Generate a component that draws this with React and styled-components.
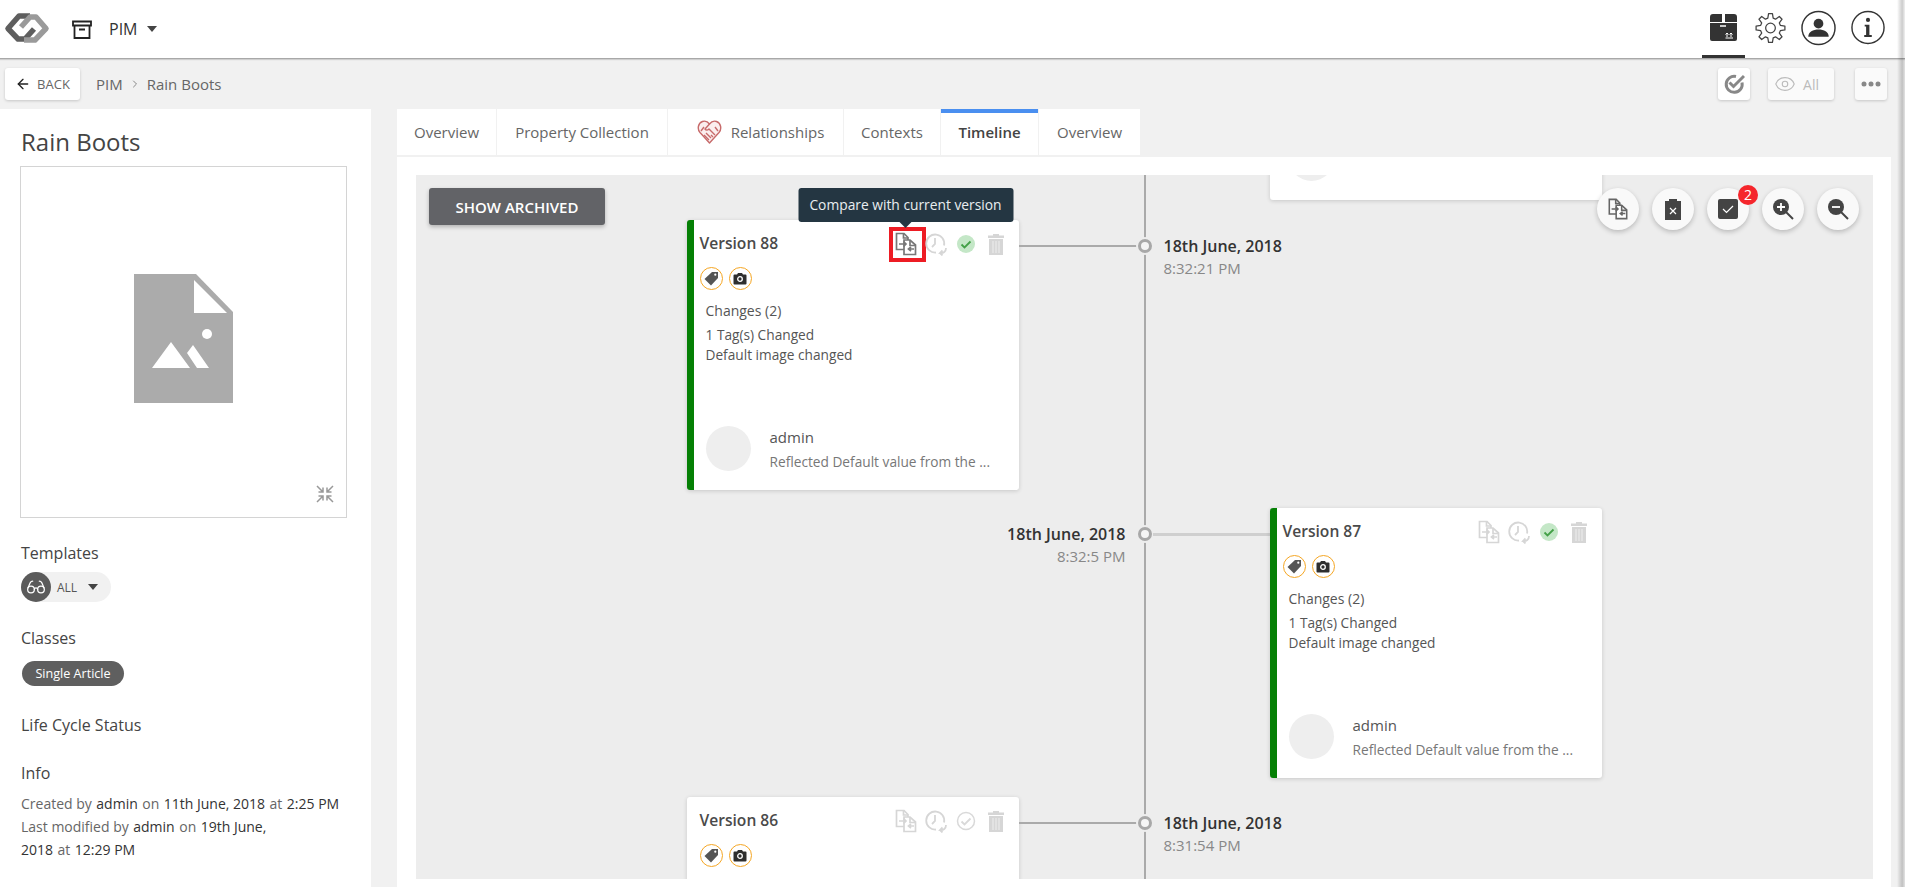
import React from 'react';
import styled, {createGlobalStyle} from 'styled-components';
import {ArrowLeft, ChevronRight, Eye, Glasses} from 'lucide-react';

const GlobalStyle = createGlobalStyle`
  html, body {
    margin: 0;
    height: 100%;
    overflow: hidden;
    background: #f1f1f1;
    font-family: "Open Sans", "Liberation Sans", sans-serif;
    color: #444;
  }
  * { box-sizing: border-box; }
`;

const Page = styled.div`
  position: relative;
  display: flex;
  flex-direction: column;
  height: 887px;
`;

const EdgeShade = styled.div`
  position: absolute;
  z-index: 5;
  top: 0;
  right: 0;
  bottom: 0;
  width: 8px;
  background: linear-gradient(to right, rgba(0, 0, 0, 0), rgba(0, 0, 0, 0.2) 65%, rgba(0, 0, 0, 0.06));
`;

const TopBar = styled.header`
  position: relative;
  display: flex;
  align-items: center;
  height: 59px;
  flex: none;
  padding: 0 20px 0 0;
  background: #fff;
  border-bottom: 1px solid #a8a8a8;
  box-shadow: 0 1px 1px rgba(0, 0, 0, 0.14);
`;

const LogoMark = styled.svg`
  width: 56px;
  height: 40px;
  margin-top: -2px;
`;

const ModuleIcon = styled.svg`
  width: 20px;
  height: 19px;
  margin-left: 16px;
`;

const ModuleName = styled.span`
  margin-left: 17px;
  font-size: 16px;
  color: #333;
`;

const Caret = styled.span`
  display: inline-block;
  margin-left: ${p => p.$gap || 10}px;
  border-left: 5px solid transparent;
  border-right: 5px solid transparent;
  border-top: 6px solid #444;
`;

const TopActions = styled.div`
  display: flex;
  align-items: center;
  margin-left: auto;
  height: 100%;
`;

const TopAction = styled.div`
  display: flex;
  align-items: center;
  justify-content: center;
  width: ${p => p.$width}px;
  height: 100%;
  margin-left: ${p => p.$left || 0}px;
  border-bottom: 3px solid ${p => p.$active ? '#333' : 'transparent'};
`;

const CrumbBar = styled.div`
  display: flex;
  align-items: center;
  height: 50px;
  flex: none;
  padding: 0 18px 0 5px;
`;

const WhiteButton = styled.button`
  display: flex;
  align-items: center;
  justify-content: center;
  gap: ${p => p.$gap || 0}px;
  width: ${p => p.$width || 32}px;
  height: 32px;
  padding: 0 ${p => p.$right || 0}px 0 0;
  margin-left: ${p => p.$left || 0}px;
  border: 0;
  border-radius: 3px;
  background: ${p => p.$faint ? '#fafafa' : '#fff'};
  box-shadow: 0 1px 3px rgba(0, 0, 0, 0.18);
  font-family: inherit;
  font-size: 13px;
  color: #666;
`;

const AllLabel = styled.span`
  font-size: 14px;
  color: #bbb;
`;

const Crumbs = styled.div`
  display: flex;
  align-items: center;
  margin-left: 16px;
  font-size: 15px;
  color: #666;
`;

const CrumbArrow = styled(ChevronRight)`
  margin: 0 6px;
`;

const CrumbSpacer = styled.div`
  flex: 1;
`;

const Body = styled.div`
  display: flex;
  flex: 1;
  min-height: 0;
`;

const SidePanel = styled.aside`
  width: 371px;
  flex: none;
  padding: 16px 20px 0 20px;
  background: #fff;
`;

const ProductTitle = styled.h1`
  margin: 0 0 8px 1px;
  font-size: 24px;
  line-height: 33px;
  font-weight: 400;
  color: #444;
`;

const ImageBox = styled.div`
  position: relative;
  display: flex;
  align-items: center;
  justify-content: center;
  width: 327px;
  height: 352px;
  padding-bottom: 7px;
  border: 1px solid #d4d4d4;
`;

const ShrinkIcon = styled.svg`
  position: absolute;
  right: 12px;
  bottom: 14px;
  width: 18px;
  height: 18px;
`;

const SideLabel = styled.div`
  margin: ${p => p.$top}px 0 ${p => p.$bottom || 0}px 1px;
  font-size: 16px;
  line-height: 22px;
  color: #444;
`;

const TemplatePill = styled.div`
  display: flex;
  align-items: center;
  width: 90px;
  height: 30px;
  margin-left: 1px;
  border-radius: 15px;
  background: #f1f1f1;
  font-size: 12px;
  color: #555;
`;

const PillIcon = styled.div`
  display: flex;
  align-items: center;
  justify-content: center;
  width: 30px;
  height: 30px;
  margin-right: 6px;
  border-radius: 50%;
  background: #5b5b5b;
  color: #fff;
`;

const ClassChip = styled.div`
  width: 102px;
  height: 25px;
  margin-left: 2px;
  border-radius: 13px;
  background: #5f5f5f;
  color: #fff;
  font-size: 12.6px;
  line-height: 25px;
  text-align: center;
`;

const InfoText = styled.div`
  margin-left: 1px;
  font-size: 14px;
  line-height: 23px;
  color: #666;
  white-space: nowrap;

  b {
    font-weight: 400;
    color: #333;
    margin: 0 4.5px;
  }

  b.first {
    margin-left: 0;
  }
`;

const Workspace = styled.main`
  display: flex;
  flex-direction: column;
  flex: 1;
  min-width: 0;
  margin-left: 26px;
  padding-right: 14px;
`;

const TabBar = styled.nav`
  display: flex;
  height: 46px;
  flex: none;
`;

const Tab = styled.div`
  display: flex;
  align-items: center;
  justify-content: center;
  gap: 9px;
  width: ${p => p.$width}px;
  margin-right: 1px;
  padding: 0 0 ${p => p.$active ? 4 : 0}px ${p => p.$nudge || 0}px;
  background: #fff;
  border-top: ${p => p.$active ? '4px solid #4a8ff0' : '0'};
  font-size: 15px;
  font-weight: ${p => p.$active ? 600 : 400};
  color: ${p => p.$active ? '#444' : '#666'};
`;

const TimelinePanel = styled.div`
  flex: 1;
  min-height: 0;
  margin-top: 2px;
  padding: 18px 18px 8px 19px;
  background: #fff;
`;

const Canvas = styled.div`
  position: relative;
  height: 100%;
  overflow: hidden;
  background: #ededed linear-gradient(#aaa, #aaa) center / 2px 100% no-repeat;
`;

const ArchiveButton = styled.button`
  position: absolute;
  z-index: 3;
  left: 13px;
  top: 13px;
  width: 176px;
  height: 37px;
  border: 0;
  border-radius: 3px;
  background: #626367;
  box-shadow: 0 2px 4px rgba(0, 0, 0, 0.25);
  color: #fff;
  font-family: inherit;
  font-size: 15px;
  font-weight: 600;
`;

const FloatTools = styled.div`
  position: absolute;
  z-index: 3;
  right: 14px;
  top: 13px;
  display: flex;
  gap: 13px;
`;

const FloatTool = styled.div`
  position: relative;
  display: flex;
  align-items: center;
  justify-content: center;
  width: 42px;
  height: 42px;
  border-radius: 50%;
  background: #f9f9f9;
  box-shadow: 0 2px 5px rgba(0, 0, 0, 0.22);
`;

const Badge = styled.span`
  position: absolute;
  top: -3px;
  right: -9px;
  width: 20px;
  height: 20px;
  border-radius: 50%;
  background: #f5262c;
  color: #fff;
  font-size: 14px;
  line-height: 20px;
  text-align: center;
`;

const Row = styled.div`
  display: grid;
  grid-template-columns: 1fr 16px 1fr;
  height: 270px;
  margin-top: ${p => p.$top}px;
`;

const RowSide = styled.div`
  display: flex;
  align-items: flex-start;
  justify-content: ${p => p.$end ? 'flex-end' : 'flex-start'};
  min-width: 0;
`;

const Card = styled.article`
  display: flex;
  flex-direction: column;
  width: 332px;
  height: 270px;
  flex: none;
  margin-left: ${p => p.$left || 0}px;
  padding: 10px 11px 0 ${p => p.$current ? 6 : 13}px;
  border-left: ${p => p.$current ? '7px solid #058005' : '0'};
  border-radius: 3px;
  background: #fff;
  box-shadow: 0 1px 4px rgba(0, 0, 0, 0.16);
`;

const CardHead = styled.div`
  display: flex;
  align-items: center;
  height: 26px;
  margin-top: 1px;
`;

const CardTitle = styled.div`
  flex: 1;
  padding-bottom: 2px;
  font-size: 15.6px;
  font-weight: 600;
  color: #4a4a4a;
`;

const CardTools = styled.div`
  display: flex;
  align-items: center;
  gap: 6px;
`;

const ToolSlot = styled.div`
  position: relative;
  display: flex;
  align-items: center;
  justify-content: center;
  width: 24px;
  height: 24px;
`;

const RedFrame = styled.span`
  position: absolute;
  left: -5px;
  top: -5px;
  width: 37px;
  height: 35px;
  border: 4px solid #ed1c24;
`;

const Tooltip = styled.div`
  position: absolute;
  z-index: 4;
  left: 50%;
  bottom: 34px;
  transform: translateX(-50%);
  width: 215px;
  height: 34px;
  border-radius: 3px;
  background: #243642;
  color: #e9eef0;
  font-size: 13.8px;
  line-height: 34px;
  text-align: center;
  white-space: nowrap;

  &::after {
    content: "";
    position: absolute;
    left: 50%;
    top: 100%;
    margin-left: -6px;
    border-left: 6px solid transparent;
    border-right: 6px solid transparent;
    border-top: 6px solid #243642;
  }
`;

const AttrRow = styled.div`
  display: flex;
  gap: 6px;
  margin-top: 10px;
`;

const AttrDot = styled.div`
  display: flex;
  align-items: center;
  justify-content: center;
  width: 23px;
  height: 23px;
  border: 1px solid #f5a623;
  border-radius: 50%;
`;

const Changes = styled.div`
  margin: 11px 0 0 6px;
  font-size: 13.7px;
  line-height: 20px;
  color: #555;
`;

const ChangesHead = styled.div`
  margin-bottom: 4px;
  font-size: 14px;
  line-height: 20px;
`;

const Author = styled.div`
  display: flex;
  align-items: center;
  gap: 19px;
  margin: auto 0 19px 6px;
`;

const Avatar = styled.div`
  width: 45px;
  height: 45px;
  flex: none;
  border-radius: 50%;
  background: #eee;
`;

const AuthorText = styled.div`
  padding-top: 2px;
`;

const AuthorName = styled.div`
  margin-bottom: 7px;
  font-size: 15px;
  line-height: 18px;
  color: #555;
`;

const AuthorNote = styled.div`
  font-size: 13.7px;
  line-height: 18px;
  color: #777;
  white-space: nowrap;
`;

const Connector = styled.div`
  width: ${p => p.$thick ? 117 : 118}px;
  flex: none;
  height: ${p => p.$thick ? 3 : 2}px;
  margin-top: 25px;
  background: ${p => p.$thick ? '#cfcfcf' : '#aaa'};
`;

const NodeCell = styled.div`
  display: flex;
  justify-content: center;
`;

const Node = styled.div`
  width: 14px;
  height: 14px;
  margin-top: 19px;
  border: 3px solid #a8a8a8;
  border-radius: 50%;
  background: #f5f5f5;
  box-shadow: 0 0 0 2px #ededed;
`;

const DateBlock = styled.div`
  margin: 15px ${p => p.$end ? 11 : 0}px 0 ${p => p.$end ? 0 : 11}px;
  text-align: ${p => p.$end ? 'right' : 'left'};
`;

const DateText = styled.div`
  font-size: 16px;
  line-height: 22px;
  font-weight: 600;
  color: #333;
`;

const TimeText = styled.div`
  font-size: 15px;
  line-height: 22px;
  color: #888;
`;

function Logo() {
    return (
        <LogoMark viewBox="0 0 56 40" fill="none" strokeWidth="5.500" strokeLinejoin="round">
            <path d="M30 8H19L8 20.500l10 10.500h7l9-10" stroke="#5e5e5e"/>
            <path d="M24 32h11l11-11.500L36 9h-6l-9 10" stroke="#9a9a9a"/>
        </LogoMark>
    );
}

// outline gear, teeth computed round the centre
function gearPath(cx, cy, outer, inner, teeth) {
    const step = (Math.PI * 2) / teeth;
    let d = '';
    for (let i = 0; i < teeth; i++) {
        const a = i * step - Math.PI / 2;
        const pts = [
            [inner, a - step * 0.34],
            [outer, a - step * 0.17],
            [outer, a + step * 0.17],
            [inner, a + step * 0.34],
        ];
        pts.forEach(([r, t], j) => {
            const x = (cx + r * Math.cos(t)).toFixed(2);
            const y = (cy + r * Math.sin(t)).toFixed(2);
            d += (i === 0 && j === 0 ? 'M' : 'L') + x + ' ' + y;
        });
    }
    return d + 'Z';
}

function HeartIcon() {
    return (
        <svg width="25" height="24" viewBox="0 0 25 24" fill="none" stroke="#c76b6b" strokeWidth="1.400" strokeLinejoin="round">
            <path d="M12.500 23L3 12.500C0 9 1 3 5.500 1.500 8.500.5 11 2 12.500 4 14 2 16.500.5 19.500 1.500 24 3 25 9 22 12.500Z" fill="#fbeeee"/>
            <path d="M12.500 4L8 9c1 1.500 2.500 1.500 4 0l6 6M4 11l3-4M21 11l-3-4"/>
            <path d="M9 13l5 5M7 15l5 5M14 15l2 2"/>
        </svg>
    );
}

function CompareIcon({color, size = 24}) {
    return (
        <svg width={size} height={size} viewBox="0 0 24 24" fill="none" stroke={color} strokeWidth="1.700">
            <path d="M10 17.500H2.500V1.500H10L14 5.500V8"/>
            <path d="M9.500 1.500V6H14"/>
            <path d="M10 8H16L21.500 13V22.500H10Z" fill="#fff"/>
            <path d="M16 8V13.500H21.500"/>
            <path d="M5 12H12M9.500 9.500l2.500 2.500-2.500 2.500"/>
            <path d="M20 17H14.500M17 15l-2.500 2 2.500 2"/>
        </svg>
    );
}

function HistoryIcon({color}) {
    return (
        <svg width="24" height="24" viewBox="0 0 24 24" fill="none" stroke={color} strokeWidth="1.800">
            <path d="M20 13.500A9 9 0 1 0 12 20.500"/>
            <path d="M11 6v6l-3 3"/>
            <path d="M22 16c0 3.500-2.500 5.500-6 5l2.500-2.500M16 21l2.500 2.500"/>
        </svg>
    );
}

function CheckIcon({done}) {
    return (
        <svg width="20" height="20" viewBox="0 0 20 20" fill="none">
            <circle cx="10" cy="10" r={done ? 9 : 8.500} fill={done ? '#c4e7c7' : 'none'} stroke={done ? 'none' : '#d9d9d9'} strokeWidth="1.500"/>
            <path d="M5.500 10.500l3 3 6-6" stroke={done ? '#43a047' : '#d9d9d9'} strokeWidth="1.800"/>
        </svg>
    );
}

function TrashIcon() {
    return (
        <svg width="18" height="21" viewBox="0 0 18 21">
            <path d="M6 0h6v1.500h5V4H1V1.500h5Z" fill="#d6d6d6"/>
            <path d="M2 5h14v16H2Z" fill="#d6d6d6"/>
            <path d="M6 7v12M9 7v12M12 7v12" stroke="#eee" strokeWidth="1"/>
        </svg>
    );
}

function TagIcon() {
    return (
        <svg width="15" height="15" viewBox="0 0 15 15">
            <path d="M8 1h6v6l-7 7.500L.5 8Z" fill="#555"/>
            <circle cx="11.300" cy="3.700" r="1.100" fill="#fff"/>
        </svg>
    );
}

function CameraIcon() {
    return (
        <svg width="14" height="13" viewBox="0 0 14 13">
            <path d="M1.500 2.500h2.500l1-1.500h4l1 1.500h2.500a1 1 0 0 1 1 1v8a1 1 0 0 1-1 1h-11a1 1 0 0 1-1-1v-8a1 1 0 0 1 1-1Z" fill="#2e2e2e"/>
            <circle cx="7" cy="7" r="2.300" fill="none" stroke="#fff" strokeWidth="1.300"/>
        </svg>
    );
}

function VersionCard({name, current, done, hovered, clipped}) {
    return (
        <Card $current={current}>
            <CardHead>
                <CardTitle>{name}</CardTitle>
                <CardTools>
                    <ToolSlot>
                        <CompareIcon color={hovered ? '#777' : '#d6d6d6'}/>
                        {hovered && <RedFrame/>}
                        {hovered && <Tooltip>Compare with current version</Tooltip>}
                    </ToolSlot>
                    <ToolSlot><HistoryIcon color="#d6d6d6"/></ToolSlot>
                    <ToolSlot><CheckIcon done={done}/></ToolSlot>
                    <ToolSlot><TrashIcon/></ToolSlot>
                </CardTools>
            </CardHead>
            <AttrRow>
                <AttrDot><TagIcon/></AttrDot>
                <AttrDot><CameraIcon/></AttrDot>
            </AttrRow>
            {!clipped && (
                <>
                    <Changes>
                        <ChangesHead>Changes (2)</ChangesHead>
                        <div>1 Tag(s) Changed</div>
                        <div>Default image changed</div>
                    </Changes>
                    <Author>
                        <Avatar/>
                        <AuthorText>
                            <AuthorName>admin</AuthorName>
                            <AuthorNote>Reflected Default value from the ...</AuthorNote>
                        </AuthorText>
                    </Author>
                </>
            )}
        </Card>
    );
}

function Stamp({date, time, end}) {
    return (
        <DateBlock $end={end}>
            <DateText>{date}</DateText>
            <TimeText>{time}</TimeText>
        </DateBlock>
    );
}

const tabs = [
    {label: 'Overview', width: 99},
    {label: 'Property Collection', width: 170},
    {label: 'Relationships', width: 175, icon: true},
    {label: 'Contexts', width: 96},
    {label: 'Timeline', width: 97, active: true},
    {label: 'Overview', width: 101},
];

export default function App() {
    return (
        <Page>
            <GlobalStyle/>
            <TopBar>
                <Logo/>
                <ModuleIcon viewBox="0 0 20 19" fill="none" stroke="#222" strokeWidth="1.800">
                    <path d="M1 1.500h18v4H1Z"/>
                    <path d="M2.500 5.500V18h15V5.500M7 9.500h6"/>
                </ModuleIcon>
                <ModuleName>PIM</ModuleName>
                <Caret/>
                <TopActions>
                    <TopAction $active $width={43}>
                        <svg width="27" height="28" viewBox="0 0 27 28">
                            <path d="M3 0h9v8H0V3a3 3 0 0 1 3-3ZM15 0h9a3 3 0 0 1 3 3v5H15Z" fill="#333"/>
                            <path d="M0 9h27v16a2 2 0 0 1-2 2H2a2 2 0 0 1-2-2Z" fill="#333"/>
                            <path d="M10 12h6" stroke="#fff" strokeWidth="1.500"/>
                            <path d="M17 23v-4M21 23v-4M15.500 24h7.500M15.500 20.500L17 19l1.500 1.500M19.500 20.500L21 19l1.500 1.500" stroke="#fff" strokeWidth="1" fill="none"/>
                        </svg>
                    </TopAction>
                    <TopAction $width={31} $left={10}>
                        <svg width="32" height="32" viewBox="0 0 32 32" fill="none" stroke="#444" strokeWidth="1.300" strokeLinejoin="round">
                            <path d={gearPath(16, 16, 15, 10.500, 8)}/>
                            <circle cx="16" cy="16" r="5"/>
                        </svg>
                    </TopAction>
                    <TopAction $width={35} $left={15}>
                        <svg width="36" height="36" viewBox="0 0 36 36">
                            <circle cx="18" cy="18" r="17" fill="none" stroke="#333" strokeWidth="1.500"/>
                            <circle cx="18" cy="13.500" r="5" fill="#333"/>
                            <path d="M7.500 27c0-5 5-7.500 10.500-7.500S28.500 22 28.500 27Z" fill="#333"/>
                        </svg>
                    </TopAction>
                    <TopAction $width={34} $left={15}>
                        <svg width="35" height="35" viewBox="0 0 36 36">
                            <circle cx="18" cy="18" r="17" fill="none" stroke="#333" strokeWidth="1.500"/>
                            <circle cx="18" cy="10" r="2.200" fill="#333"/>
                            <path d="M14.500 15h5v11h2.500v2h-8v-2H16v-9h-1.500Z" fill="#333"/>
                        </svg>
                    </TopAction>
                </TopActions>
            </TopBar>
            <CrumbBar>
                <WhiteButton $width={75} $gap={6}>
                    <ArrowLeft size={16} color="#222"/>
                    BACK
                </WhiteButton>
                <Crumbs>
                    PIM
                    <CrumbArrow size={12} color="#888"/>
                    Rain Boots
                </Crumbs>
                <CrumbSpacer/>
                <WhiteButton>
                    <svg width="22" height="22" viewBox="0 0 22 22" fill="none" stroke="#888" strokeWidth="3">
                        <path d="M19 9.500A8 8 0 1 1 13 3.500"/>
                        <path d="M6.500 9.500l4 4L21 3"/>
                    </svg>
                </WhiteButton>
                <WhiteButton $width={66} $left={18} $gap={7} $right={9} $faint>
                    <Eye size={22} strokeWidth={1.200} color="#bbb"/>
                    <AllLabel>All</AllLabel>
                </WhiteButton>
                <WhiteButton $left={21} $faint>
                    <svg width="20" height="6" viewBox="0 0 20 6" fill="#888">
                        <circle cx="3" cy="3" r="2.500"/>
                        <circle cx="10" cy="3" r="2.500"/>
                        <circle cx="17" cy="3" r="2.500"/>
                    </svg>
                </WhiteButton>
            </CrumbBar>
            <Body>
                <SidePanel>
                    <ProductTitle>Rain Boots</ProductTitle>
                    <ImageBox>
                        <svg width="99" height="129" viewBox="0 0 99 129">
                            <path d="M0 0H62L99 38V129H0Z" fill="#ababab"/>
                            <path d="M60 6V39H93Z" fill="#fff"/>
                            <circle cx="73" cy="60" r="5" fill="#fff"/>
                            <path d="M18 94L37 68L56 94ZM53 79L59 71L75 94H63Z" fill="#fff"/>
                        </svg>
                        <ShrinkIcon viewBox="0 0 18 18" fill="none" stroke="#999" strokeWidth="1.500">
                            <path d="M1 1l6 6M7 2.500V7H2.500M17 1l-6 6M11 2.500V7h4.500M1 17l6-6M7 15.500V11H2.500M17 17l-6-6M11 15.500V11h4.500"/>
                        </ShrinkIcon>
                    </ImageBox>
                    <SideLabel $top={24} $bottom={8}>Templates</SideLabel>
                    <TemplatePill>
                        <PillIcon><Glasses size={20} strokeWidth={1.500}/></PillIcon>
                        ALL
                        <Caret $gap={11}/>
                    </TemplatePill>
                    <SideLabel $top={25} $bottom={12}>Classes</SideLabel>
                    <ClassChip>Single Article</ClassChip>
                    <SideLabel $top={28}>Life Cycle Status</SideLabel>
                    <SideLabel $top={26} $bottom={8}>Info</SideLabel>
                    <InfoText>
                        Created by<b>admin</b>on<b>11th June, 2018</b>at<b>2:25 PM</b>
                        <br/>
                        Last modified by<b>admin</b>on<b>19th June,</b>
                        <br/>
                        <b className="first">2018</b>at<b>12:29 PM</b>
                    </InfoText>
                </SidePanel>
                <Workspace>
                    <TabBar>
                        {tabs.map((tab, i) => (
                            <Tab key={i} $width={tab.width} $active={tab.active} $nudge={tab.icon ? 10 : 0}>
                                {tab.icon && <HeartIcon/>}
                                {tab.label}
                            </Tab>
                        ))}
                    </TabBar>
                    <TimelinePanel>
                        <Canvas>
                            <ArchiveButton>SHOW ARCHIVED</ArchiveButton>
                            <FloatTools>
                                <FloatTool><CompareIcon color="#666" size={22}/></FloatTool>
                                <FloatTool>
                                    <svg width="18" height="22" viewBox="0 0 18 22">
                                        <path d="M1 3h4V1h8v2h4v19H1Z" fill="#444"/>
                                        <path d="M6 10l6 6M12 10l-6 6" stroke="#fff" strokeWidth="1.200"/>
                                    </svg>
                                </FloatTool>
                                <FloatTool>
                                    <svg width="20" height="20" viewBox="0 0 20 20">
                                        <rect width="20" height="20" rx="2" fill="#444"/>
                                        <path d="M5 10l3.500 3.500L15 7" stroke="#fff" strokeWidth="1.200" fill="none"/>
                                    </svg>
                                    <Badge>2</Badge>
                                </FloatTool>
                                <FloatTool>
                                    <svg width="22" height="22" viewBox="0 0 22 22">
                                        <circle cx="9" cy="9" r="8" fill="#444"/>
                                        <path d="M5 9h8M9 5v8" stroke="#fff" strokeWidth="1.800"/>
                                        <path d="M14 14l7 7" stroke="#444" strokeWidth="2"/>
                                    </svg>
                                </FloatTool>
                                <FloatTool>
                                    <svg width="22" height="22" viewBox="0 0 22 22">
                                        <circle cx="9" cy="9" r="8" fill="#444"/>
                                        <path d="M5 9h8" stroke="#fff" strokeWidth="1.800"/>
                                        <path d="M14 14l7 7" stroke="#444" strokeWidth="2"/>
                                    </svg>
                                </FloatTool>
                            </FloatTools>
                            <Row $top={-245}>
                                <RowSide/>
                                <NodeCell/>
                                <RowSide>
                                    <Card $left={117}>
                                        <Author>
                                            <Avatar/>
                                        </Author>
                                    </Card>
                                </RowSide>
                            </Row>
                            <Row $top={20}>
                                <RowSide $end>
                                    <VersionCard name="Version 88" current done hovered/>
                                    <Connector/>
                                </RowSide>
                                <NodeCell><Node/></NodeCell>
                                <RowSide>
                                    <Stamp date="18th June, 2018" time="8:32:21 PM"/>
                                </RowSide>
                            </Row>
                            <Row $top={18}>
                                <RowSide $end>
                                    <Stamp end date="18th June, 2018" time="8:32:5 PM"/>
                                </RowSide>
                                <NodeCell><Node/></NodeCell>
                                <RowSide>
                                    <Connector $thick/>
                                    <VersionCard name="Version 87" current done/>
                                </RowSide>
                            </Row>
                            <Row $top={19}>
                                <RowSide $end>
                                    <VersionCard name="Version 86" clipped/>
                                    <Connector/>
                                </RowSide>
                                <NodeCell><Node/></NodeCell>
                                <RowSide>
                                    <Stamp date="18th June, 2018" time="8:31:54 PM"/>
                                </RowSide>
                            </Row>
                        </Canvas>
                    </TimelinePanel>
                </Workspace>
            </Body>
            <EdgeShade/>
        </Page>
    );
}
